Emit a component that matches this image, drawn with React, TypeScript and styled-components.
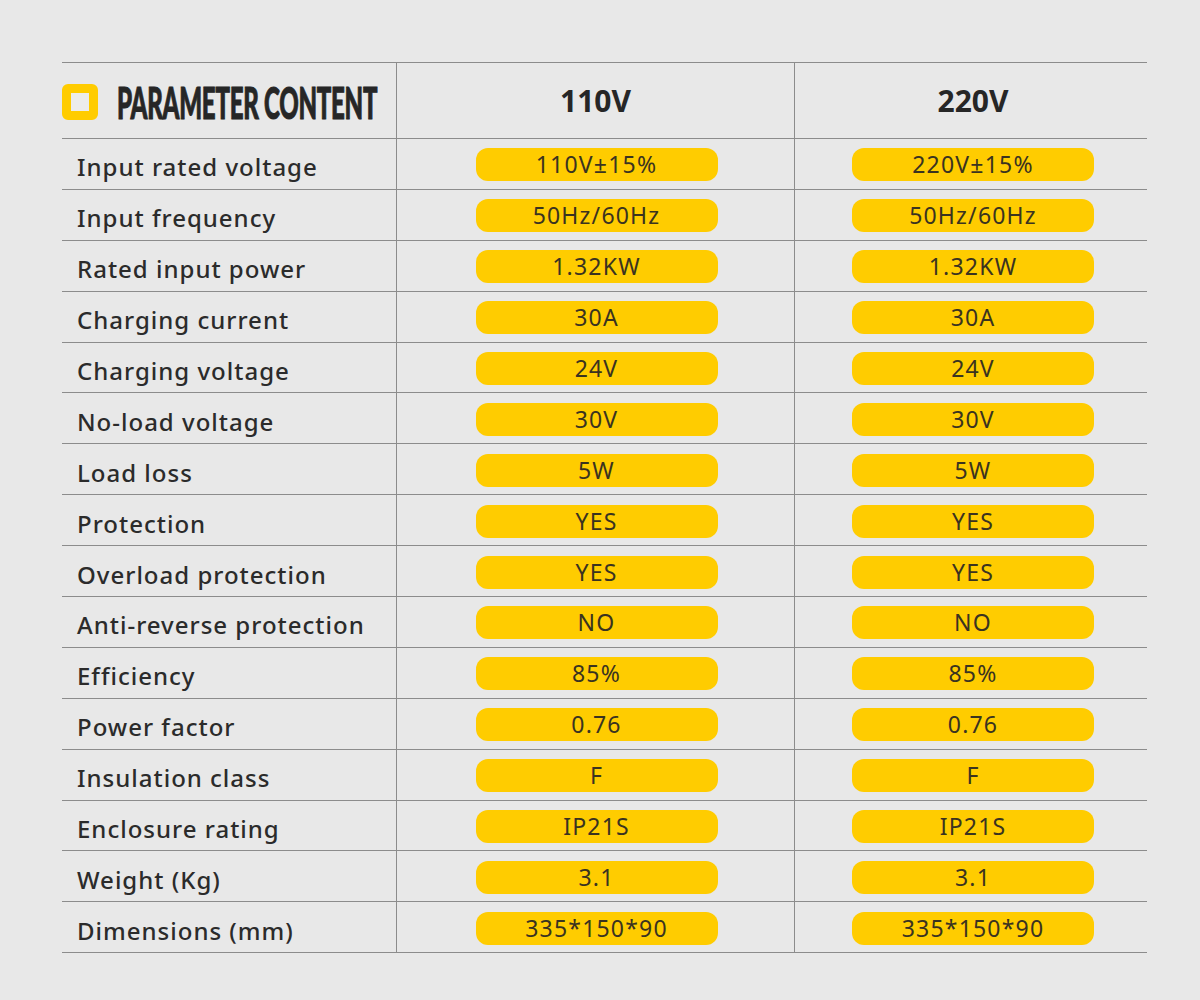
import styled, { createGlobalStyle } from 'styled-components'

const specs: [string, string, string][] = [
  ['Input rated voltage', '110V±15%', '220V±15%'],
  ['Input frequency', '50Hz/60Hz', '50Hz/60Hz'],
  ['Rated input power', '1.32KW', '1.32KW'],
  ['Charging current', '30A', '30A'],
  ['Charging voltage', '24V', '24V'],
  ['No-load voltage', '30V', '30V'],
  ['Load loss', '5W', '5W'],
  ['Protection', 'YES', 'YES'],
  ['Overload protection', 'YES', 'YES'],
  ['Anti-reverse protection', 'NO', 'NO'],
  ['Efficiency', '85%', '85%'],
  ['Power factor', '0.76', '0.76'],
  ['Insulation class', 'F', 'F'],
  ['Enclosure rating', 'IP21S', 'IP21S'],
  ['Weight (Kg)', '3.1', '3.1'],
  ['Dimensions (mm)', '335*150*90', '335*150*90'],
]

const GlobalStyle = createGlobalStyle`
  html, body {
    margin: 0;
    padding: 0;
    background: #e8e8e8;
  }
  body {
    font-family: 'Noto Sans', 'Open Sans', sans-serif;
    color: #2b2b2b;
  }
`

export default function App() {
  return (
    <>
      <GlobalStyle />
      <Page>
        <Table>
          <HeaderRow>
            <TitleCell>
              <TitleIcon />
              <Title>PARAMETER CONTENT</Title>
            </TitleCell>
            <VoltCell>110V</VoltCell>
            <VoltCell last>220V</VoltCell>
          </HeaderRow>
          {specs.map(([label, a, b]) => (
            <Row key={label}>
              <Label>{label}</Label>
              <ValueCell>
                <Pill>{a}</Pill>
              </ValueCell>
              <ValueCell last>
                <Pill>{b}</Pill>
              </ValueCell>
            </Row>
          ))}
        </Table>
      </Page>
    </>
  )
}

const Page = styled.div`
  width: 1200px;
  height: 1000px;
  padding: 62px 53px 0 62px;
  box-sizing: border-box;
`

const Table = styled.div`
  display: flex;
  flex-direction: column;
  width: 1085px;
  border-top: 1.5px solid #8c8c8c;
`

const HeaderRow = styled.div`
  display: grid;
  grid-template-columns: 335px 398px 352px;
  height: 76px;
  border-bottom: 1.5px solid #8c8c8c;
  box-sizing: border-box;
`

const Row = styled.div`
  display: grid;
  grid-template-columns: 335px 398px 352px;
  height: 50.9px;
  border-bottom: 1.5px solid #8c8c8c;
  box-sizing: border-box;
`

const TitleCell = styled.div`
  display: flex;
  align-items: center;
  gap: 19px;
  border-right: 1.5px solid #8c8c8c;
  padding-top: 3px;
  overflow: visible;
`

const TitleIcon = styled.div`
  flex-shrink: 0;
  width: 36px;
  height: 36px;
  box-sizing: border-box;
  border: 9px solid #ffcc00;
  border-radius: 6px;
  background: #ececec;
`

const Title = styled.span`
  font-family: 'Lato', 'DejaVu Sans Condensed', sans-serif;
  font-weight: 900;
  font-size: 43px;
  letter-spacing: -0.5px;
  color: #262626;
  -webkit-text-stroke: 1px #262626;
  transform: scaleX(0.56);
  transform-origin: left center;
  white-space: nowrap;
`

const VoltCell = styled.div<{ last?: boolean }>`
  display: flex;
  align-items: center;
  justify-content: center;
  font-family: 'Noto Sans', sans-serif;
  font-weight: 700;
  font-size: 30px;
  color: #262626;
  border-right: ${(p) => (p.last ? 'none' : '1.5px solid #8c8c8c')};
  padding-left: ${(p) => (p.last ? '4px' : '0')};
`

const Label = styled.div`
  display: flex;
  align-items: center;
  padding: 6px 0 0 15px;
  font-size: 24px;
  font-weight: 500;
  letter-spacing: 1px;
  color: #2b2b2b;
  border-right: 1.5px solid #8c8c8c;
  white-space: nowrap;
`

const ValueCell = styled.div<{ last?: boolean }>`
  display: flex;
  align-items: center;
  justify-content: center;
  padding-top: 2px;
  padding-left: ${(p) => (p.last ? '4px' : '2px')};
  border-right: ${(p) => (p.last ? 'none' : '1.5px solid #8c8c8c')};
`

const Pill = styled.div`
  width: 242px;
  height: 33px;
  border-radius: 12px;
  background: #ffcc00;
  display: flex;
  align-items: center;
  justify-content: center;
  font-size: 23px;
  font-weight: 400;
  letter-spacing: 1.2px;
  color: #3a3320;
  line-height: 1;
`
